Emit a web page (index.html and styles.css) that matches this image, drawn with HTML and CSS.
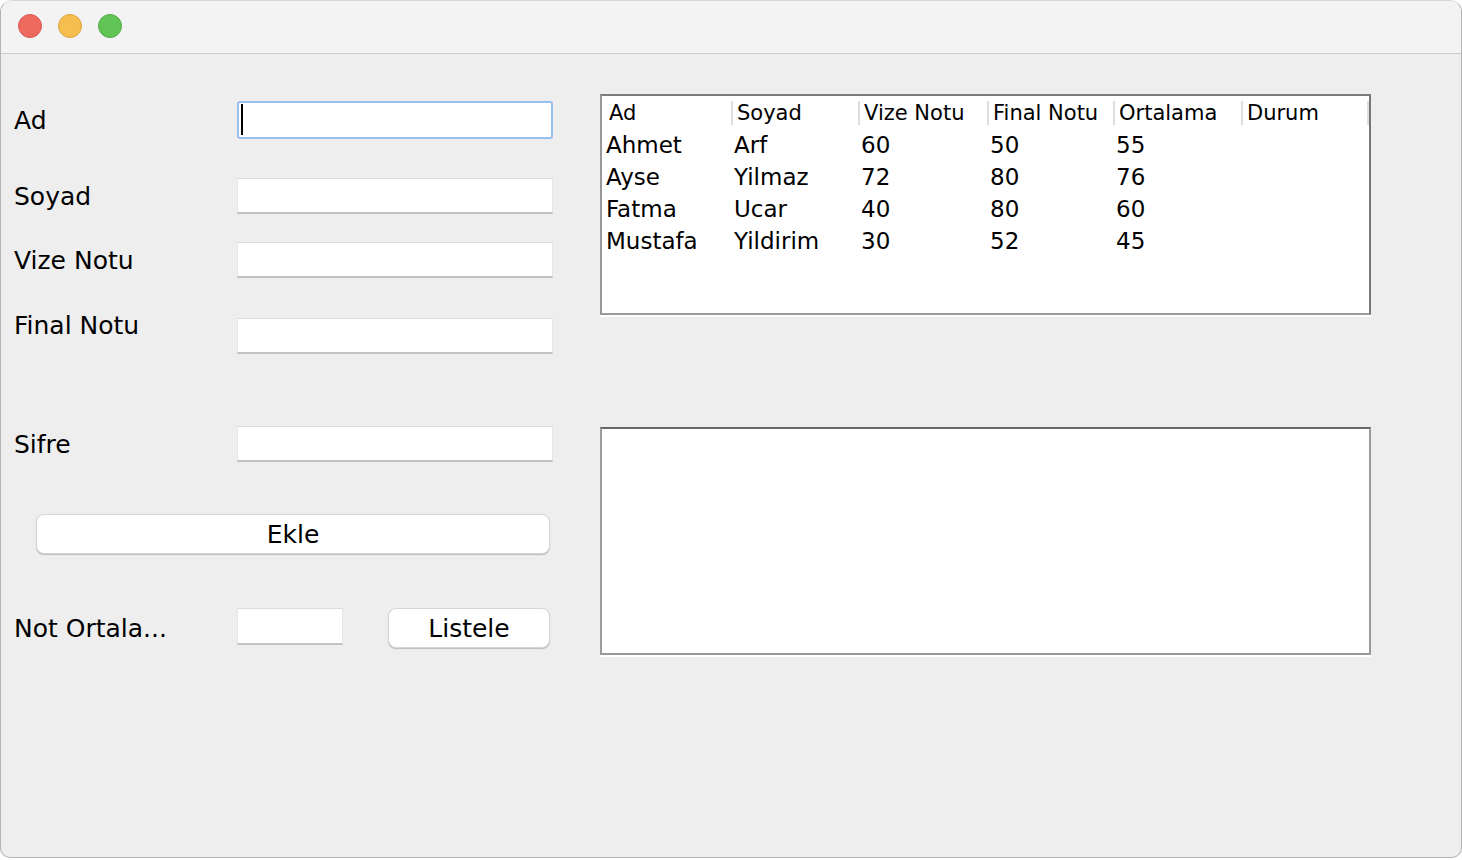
FILE: index.html
```html
<!DOCTYPE html>
<html>
<head>
<meta charset="utf-8">
<link rel="stylesheet" href="styles.css">
</head>
<body>
<div class="window">
  <div class="titlebar">
    <span class="light red"></span>
    <span class="light yellow"></span>
    <span class="light green"></span>
  </div>
  <div class="content">
    <div class="form">
      <div class="row r-ad">
        <span class="lbl">Ad</span>
        <div class="field focused"><span class="caret"></span></div>
      </div>
      <div class="row r-soyad">
        <span class="lbl">Soyad</span>
        <div class="field"></div>
      </div>
      <div class="row r-vize">
        <span class="lbl">Vize Notu</span>
        <div class="field"></div>
      </div>
      <div class="row r-final">
        <span class="lbl lbl-up">Final Notu</span>
        <div class="field"></div>
      </div>
      <div class="row r-sifre">
        <span class="lbl">Sifre</span>
        <div class="field"></div>
      </div>
      <button class="btn btn-ekle">Ekle</button>
      <div class="row r-not">
        <span class="lbl lbl-tall">Not Ortala...</span>
        <div class="field field-small"></div>
        <button class="btn btn-listele">Listele</button>
      </div>
    </div>
    <div class="side">
      <div class="table">
        <div class="grid thead">
          <div class="th first"><span>Ad</span><i class="sep"></i></div>
          <div class="th"><span>Soyad</span><i class="sep"></i></div>
          <div class="th"><span>Vize Notu</span><i class="sep"></i></div>
          <div class="th"><span>Final Notu</span><i class="sep"></i></div>
          <div class="th"><span>Ortalama</span><i class="sep"></i></div>
          <div class="th"><span>Durum</span><i class="sep"></i></div>
        </div>
        <div class="grid trow">
          <div class="td first">Ahmet</div><div class="td">Arf</div><div class="td">60</div><div class="td">50</div><div class="td">55</div><div class="td"></div>
        </div>
        <div class="grid trow">
          <div class="td first">Ayse</div><div class="td">Yilmaz</div><div class="td">72</div><div class="td">80</div><div class="td">76</div><div class="td"></div>
        </div>
        <div class="grid trow">
          <div class="td first">Fatma</div><div class="td">Ucar</div><div class="td">40</div><div class="td">80</div><div class="td">60</div><div class="td"></div>
        </div>
        <div class="grid trow">
          <div class="td first">Mustafa</div><div class="td">Yildirim</div><div class="td">30</div><div class="td">52</div><div class="td">45</div><div class="td"></div>
        </div>
      </div>
      <div class="textarea"></div>
    </div>
  </div>
</div>
</body>
</html>
```
FILE: styles.css
```css
* { box-sizing: border-box; }
body {
  margin: 0;
  background: #ffffff;
  font-family: "DejaVu Sans", "Liberation Sans", sans-serif;
  color: #000;
}
.window {
  width: 1462px;
  height: 858px;
  background: #eeeeee;
  border: 1px solid #b4b4b4;
  border-top-color: #d8d8d8;
  border-radius: 12px 12px 10px 10px;
  overflow: hidden;
  display: flex;
  flex-direction: column;
}
.titlebar {
  height: 53px;
  flex: none;
  background: #f3f3f3;
  border-bottom: 1px solid #cbcbcb;
  display: flex;
  align-items: center;
  gap: 16px;
  padding: 0 0 2px 17px;
}
.light {
  width: 24px;
  height: 24px;
  border-radius: 50%;
  display: block;
}
.red { background: #ee6a5f; border: 1px solid #d65a50; }
.yellow { background: #f6be4f; border: 1px solid #dba640; }
.green { background: #61c454; border: 1px solid #52ab45; }

.content {
  flex: 1;
  display: flex;
}
.form {
  width: 599px;
  flex: none;
  padding: 47px 0 0 13px;
  display: flex;
  flex-direction: column;
  align-items: flex-start;
}
.row {
  display: flex;
  align-items: center;
}
.lbl {
  width: 223px;
  flex: none;
  font-size: 25px;
  line-height: 30px;
  padding-top: 1px;
}
.lbl-up {
  align-self: flex-start;
  margin-top: -8px;
}
.lbl-tall { line-height: 40px; }
.field {
  width: 316px;
  height: 36px;
  background: #fff;
  border-top: 1px solid #dcdcdc;
  border-left: 1px solid #e6e6e6;
  border-right: 1px solid #e6e6e6;
  border-bottom: 2px solid #c2c2c2;
}
.field.focused {
  height: 38px;
  border: 2px solid #98c0ef;
  border-radius: 3px;
  padding: 1px 0 0 2px;
}
.caret {
  display: block;
  width: 2px;
  height: 31px;
  background: #000;
}
.r-soyad { margin-top: 39px; }
.r-vize { margin-top: 28px; }
.r-final { margin-top: 40px; }
.r-sifre { margin-top: 72px; }
.btn {
  background: #fff;
  border: 1px solid #d6d6d6;
  border-radius: 8px;
  box-shadow: 0 1px 1px rgba(0, 0, 0, 0.22);
  font-family: inherit;
  font-size: 25px;
  color: #000;
  height: 40px;
  padding: 0;
}
.btn-ekle {
  margin: 52px 0 0 22px;
  width: 514px;
}
.r-not {
  margin-top: 54px;
  align-items: flex-start;
}
.field-small {
  width: 106px;
  height: 37px;
}
.btn-listele {
  width: 162px;
  margin-left: 45px;
}

.side {
  flex: 1;
  padding-top: 40px;
}
.table {
  width: 771px;
  height: 221px;
  background: #fff;
  border-top: 2px solid #7c7c7c;
  border-right: 2px solid #777;
  border-left: 2px solid #989898;
  border-bottom: 2px solid #9a9a9a;
  box-shadow: 0 2px 0 #ffffff;
}
.grid {
  display: grid;
  grid-template-columns: 131px 127px 129px 126px 128px 126px;
}
.thead { height: 33px; }
.th {
  display: flex;
  align-items: center;
  font-size: 21px;
  padding: 1px 0 0 4px;
}
.th.first { padding-left: 7px; }
.sep {
  margin-left: auto;
  width: 2px;
  height: 24px;
  background: #dedede;
}
.trow { height: 32px; }
.td {
  font-size: 23px;
  line-height: 32px;
  padding-left: 1px;
  white-space: nowrap;
}
.td.first { padding-left: 4px; }
.textarea {
  margin-top: 112px;
  width: 771px;
  height: 228px;
  background: #fff;
  border-top: 2px solid #666;
  border-right: 2px solid #999;
  border-left: 2px solid #9c9c9c;
  border-bottom: 2px solid #999;
  box-shadow: 0 2px 0 #ffffff;
}
```
